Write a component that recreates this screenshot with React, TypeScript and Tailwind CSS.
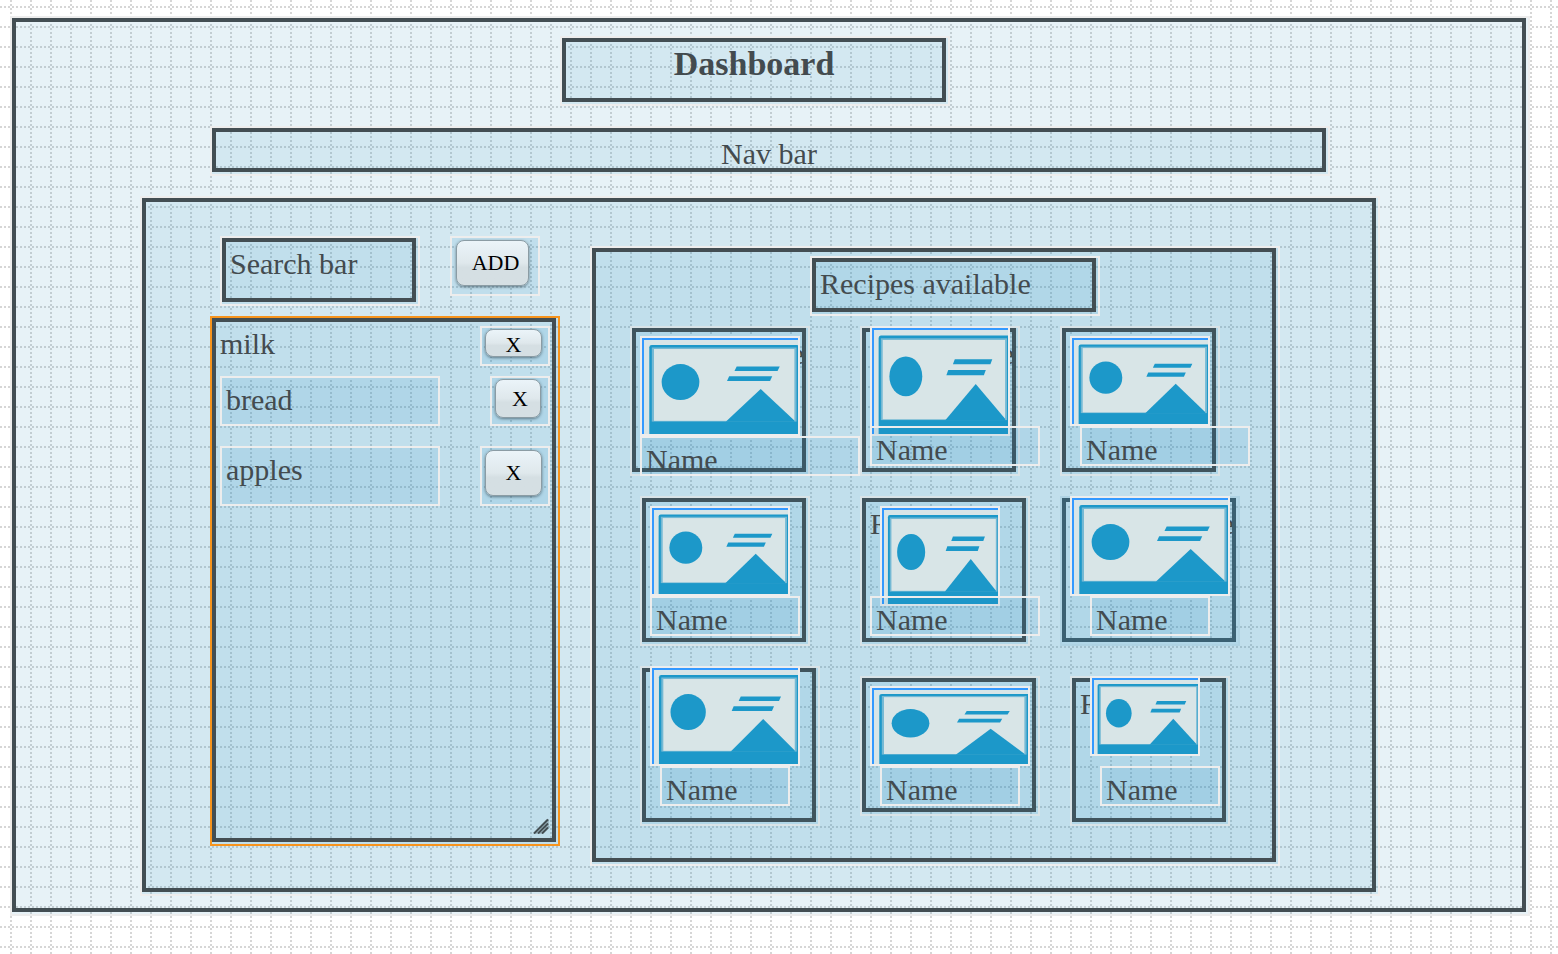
import type { ReactNode } from "react";

type FrameProps = {
  className?: string;
  tone?: string;
  edge?: string;
  fill?: string;
  bodyClass?: string;
  children?: ReactNode;
};

/* Container widget: thin light edge, translucent fill, heavy dark frame inside. */
function Frame({
  className = "",
  tone = "border-[#ededed]",
  edge = "border-[#434e53]",
  fill = "bg-[#2892c6]/10",
  bodyClass = "",
  children,
}: FrameProps) {
  return (
    <div className={`flex border-2 pr-0.5 pb-0.5 ${fill} ${tone} ${className}`}>
      <div className={`min-w-0 flex-1 border-4 ${edge} ${bodyClass}`}>{children}</div>
    </div>
  );
}

/* Plain text widget. */
function Label({ className = "", children }: { className?: string; children: ReactNode }) {
  return (
    <div className={`border-2 border-[#ededed] bg-[#2088c0]/10 p-1 leading-9 whitespace-nowrap ${className}`}>
      {children}
    </div>
  );
}

function WidgetButton({
  boxClass,
  buttonClass,
  label,
  children,
}: {
  boxClass: string;
  buttonClass: string;
  label: string;
  children: ReactNode;
}) {
  return (
    <div className={`border-2 border-[#ededed] bg-[#2088c0]/10 ${boxClass}`}>
      <button
        type="button"
        aria-label={label}
        className={`flex items-center justify-center rounded-lg border border-[#8b9ca4] bg-linear-to-b from-[#ebf4f9] from-0% via-[#dfe8ec] via-50% to-[#d5dfe3] to-60% text-[22px] leading-6 text-black shadow-[0_1px_3px_rgba(40,60,70,0.6)] ${buttonClass}`}
      >
        {children}
      </button>
    </div>
  );
}

function Picture({ className }: { className: string }) {
  return (
    <div className={`absolute overflow-hidden border-2 border-[#ededed] bg-[#d8e5e7] ${className}`}>
      <div className="h-full w-full border-t-2 border-l-2 border-[#3399ff]">
        <svg
          className="block h-[calc(100%+2px)] w-[calc(100%+2px)] max-w-none overflow-visible"
          viewBox="0 0 1000 1000"
          preserveAspectRatio="none"
          aria-hidden="true"
        >
          <rect x="34" y="52" width="962" height="960" rx="16" ry="24" fill="#1c98c9" />
          <rect x="50" y="78" width="928" height="772" fill="#74b9d4" />
          <rect x="64" y="94" width="900" height="748" fill="#d8e5e7" />
          <ellipse cx="234" cy="438" rx="121" ry="187" fill="#1c98c9" />
          <path d="M594 276 L870 276 L856 324 L580 324 Z" fill="#1c98c9" />
          <path d="M546 377 L822 377 L808 427 L532 427 Z" fill="#1c98c9" />
          <path d="M524 852 L748 510 L964 838 L964 852 Z" fill="#1c98c9" />
        </svg>
      </div>
    </div>
  );
}

type Recipe = {
  card: string;
  text: string;
  picture: string;
  name: string;
  tone?: string;
  edge?: string;
};

const recipes: Recipe[] = [
  {
    card: "h-[150px] w-[180px]",
    text: "-mr-0.5 text-right",
    picture: "top-2 left-2 h-[100px] w-[160px]",
    name: "top-[108px] left-2 h-10 w-[220px]",
  },
  {
    card: "h-[150px] w-[160px]",
    text: "-mr-0.5 text-right",
    picture: "-top-0.5 left-2 h-[110px] w-[140px]",
    name: "top-[98px] left-2 h-10 w-[170px]",
  },
  {
    card: "h-[150px] w-[160px]",
    text: "pl-1",
    picture: "top-2 left-2 h-[90px] w-[140px]",
    name: "top-[98px] left-[18px] h-10 w-[170px]",
  },
  {
    card: "ml-2.5 h-[150px] w-[170px]",
    text: "pl-1",
    picture: "top-2 left-2 h-[90px] w-[140px]",
    name: "top-[98px] left-2 h-10 w-[150px]",
  },
  {
    card: "h-[150px] w-[170px]",
    text: "pl-1",
    picture: "top-2 left-[18px] h-[100px] w-[120px]",
    name: "top-[98px] left-2 h-10 w-[170px]",
  },
  {
    card: "h-[150px] w-[180px]",
    text: "-mr-0.5 text-right",
    picture: "-top-0.5 left-2 h-[100px] w-[160px]",
    name: "top-[98px] left-7 h-10 w-[120px]",
    tone: "border-[#afd3e3]",
    edge: "border-[#3a6072]",
  },
  {
    card: "ml-2.5 h-[160px] w-[180px]",
    text: "pl-1",
    picture: "-top-0.5 left-2 h-[100px] w-[150px]",
    name: "top-[98px] left-[18px] h-10 w-[130px]",
  },
  {
    card: "mt-2.5 h-[140px] w-[180px]",
    text: "pl-1",
    picture: "top-2 left-2 h-[80px] w-[160px]",
    name: "top-[88px] left-[18px] h-10 w-[140px]",
  },
  {
    card: "mt-2.5 ml-2.5 h-[150px] w-[160px]",
    text: "pl-1",
    picture: "-top-0.5 left-[18px] h-[80px] w-[110px]",
    name: "top-[88px] left-7 h-10 w-[120px]",
  },
];

function RecipeCard({ recipe }: { recipe: Recipe }) {
  return (
    <Frame
      className={`relative ${recipe.card}`}
      tone={recipe.tone ?? "border-[#d8e3e7]"}
      edge={recipe.edge ?? "border-[#40545d]"}
      bodyClass="overflow-hidden"
    >
      <p className={`pt-1 leading-9 ${recipe.text}`}>Recipe</p>
      <Picture className={recipe.picture} />
      <Label className={`absolute ${recipe.name}`}>Name</Label>
    </Frame>
  );
}

function ResizeGrip() {
  return (
    <svg className="mt-auto mr-[3px] mb-1 self-end" width="16" height="16" viewBox="0 0 16 16" aria-hidden="true">
      <path d="M0 16 L14 1 H16 V10 L10 16 Z" fill="#434e53" fillOpacity="0.25" />
      <path d="M1 15.500 L15 1.500 M5 15.500 L15 5.500 M9 15.500 L15 9.500" stroke="#434e53" strokeWidth="2" fill="none" />
    </svg>
  );
}

export default function App() {
  return (
    <div className="min-h-screen bg-white bg-[conic-gradient(at_2px_2px,transparent_75%,#d6d6d6_0),conic-gradient(at_2px_2px,transparent_75%,#d6d6d6_0)] bg-[size:4px_20px,20px_4px] bg-[position:0_6px,10px_0] pt-4 pr-7 pb-9 pl-2.5 font-['Liberation_Serif',serif] text-[30px] text-[#434b4f]">
      <Frame fill="bg-[#0f7daf]/10" bodyClass="pt-3.5 pb-3">
        <header className="flex justify-center pr-7">
          <Frame className="h-[70px] w-[390px]" bodyClass="pt-1">
            <h1 className="text-center text-[34px] leading-9 font-bold">Dashboard</h1>
          </Frame>
        </header>

        <nav className="mt-5 mr-[192px] ml-[194px]">
          <Frame className="h-[50px]" bodyClass="pt-1 text-center leading-9">
            Nav bar
          </Frame>
        </nav>

        <main className="mt-5 mr-[142px] ml-[124px]">
          <Frame bodyClass="flex items-start gap-[30px] pt-[34px] pr-[92px] pb-[22px] pl-16">
            <section className="w-[350px] shrink-0">
              <div className="flex items-start gap-[30px] pl-2.5">
                <Frame className="h-[70px] w-[200px]" bodyClass="p-1">
                  <input
                    type="text"
                    aria-label="Search bar"
                    placeholder="Search bar"
                    className="block h-9 w-full bg-transparent leading-9 outline-none placeholder:text-[#434b4f]"
                  />
                </Frame>
                <WidgetButton boxClass="h-[60px] w-[90px] pt-0.5 pl-1" buttonClass="h-[46px] w-[73px] pl-1.5" label="Add">
                  ADD
                </WidgetButton>
              </div>

              <Frame className="mt-2.5 h-[530px]" tone="border-[#f7941d]" bodyClass="flex flex-col">
                <ul className="flex flex-col pt-1 pr-0.5 pl-1">
                  <li className="flex items-start justify-between">
                    <span className="leading-9">milk</span>
                    <WidgetButton boxClass="h-10 w-[70px] pt-px pl-[3px]" buttonClass="h-7 w-[57px] pt-1" label="Remove milk">
                      X
                    </WidgetButton>
                  </li>
                  <li className="mt-2.5 flex items-start justify-between">
                    <Label className="h-[50px] w-[220px]">bread</Label>
                    <WidgetButton boxClass="h-[50px] w-[60px] pt-px pl-[3px]" buttonClass="h-[39px] w-[46px] pl-1" label="Remove bread">
                      X
                    </WidgetButton>
                  </li>
                  <li className="mt-5 flex items-start justify-between">
                    <Label className="h-[60px] w-[220px]">apples</Label>
                    <WidgetButton boxClass="h-[60px] w-[70px] pt-0.5 pl-[3px]" buttonClass="h-[46px] w-[57px]" label="Remove apples">
                      X
                    </WidgetButton>
                  </li>
                </ul>
                <ResizeGrip />
              </Frame>
            </section>

            <section className="mt-2.5 min-w-0 flex-1">
              <Frame bodyClass="pt-1 pb-8">
                <Frame className="ml-[214px] h-[60px] w-[290px]" bodyClass="p-1">
                  <h2 className="leading-9 whitespace-nowrap">Recipes available</h2>
                </Frame>
                <div className="mt-2.5 grid grid-cols-[230px_200px_1fr] items-start gap-y-5 pl-[34px]">
                  {recipes.map((recipe, i) => (
                    <RecipeCard key={i} recipe={recipe} />
                  ))}
                </div>
              </Frame>
            </section>
          </Frame>
        </main>
      </Frame>
    </div>
  );
}
